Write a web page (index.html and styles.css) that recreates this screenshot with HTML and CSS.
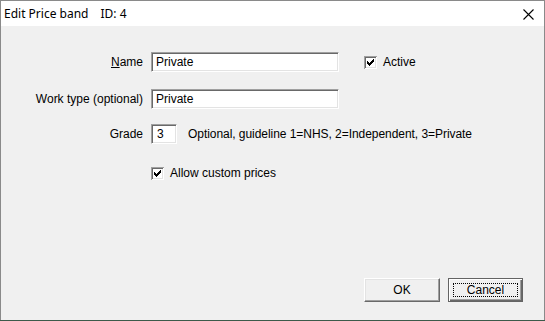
FILE: index.html
```html
<!DOCTYPE html>
<html>
<head>
<meta charset="utf-8">
<link rel="stylesheet" href="styles.css">
</head>
<body>
<div class="window">
  <div class="titlebar">
    <span class="title">Edit Price band</span>
    <span class="title-id">ID: 4</span>
    <span class="spacer"></span>
    <svg class="close" width="11" height="11" viewBox="0 0 11 11"><path d="M0.5 0.5 L10.5 10.5 M10.5 0.5 L0.5 10.5" stroke="#000" stroke-width="1.1" fill="none"/></svg>
  </div>
  <div class="content">
    <div class="row row-name">
      <label class="label"><u>N</u>ame</label>
      <div class="field field-wide">Private</div>
      <div class="check check-active">
        <svg class="cb" width="13" height="13" viewBox="0 0 13 13" shape-rendering="crispEdges"><rect x="0" y="0" width="13" height="13" fill="#a0a0a0"/><rect x="1" y="1" width="12" height="12" fill="#fff"/><rect x="1" y="1" width="11" height="11" fill="#696969"/><rect x="2" y="2" width="10" height="10" fill="#e3e3e3"/><rect x="2" y="2" width="9" height="9" fill="#fff"/><g fill="#000"><rect x="3" y="5" width="1" height="3"/><rect x="4" y="6" width="1" height="3"/><rect x="5" y="7" width="1" height="3"/><rect x="6" y="6" width="1" height="3"/><rect x="7" y="5" width="1" height="3"/><rect x="8" y="4" width="1" height="3"/><rect x="9" y="3" width="1" height="3"/></g></svg>
        <span>Active</span>
      </div>
    </div>
    <div class="row row-work">
      <label class="label">Work type (optional)</label>
      <div class="field field-wide">Private</div>
    </div>
    <div class="row row-grade">
      <label class="label">Grade</label>
      <div class="field field-small">3</div>
      <span class="hint">Optional, guideline 1=NHS, 2=Independent, 3=Private</span>
    </div>
    <div class="row row-custom">
      <div class="check check-custom">
        <svg class="cb" width="13" height="13" viewBox="0 0 13 13" shape-rendering="crispEdges"><rect x="0" y="0" width="13" height="13" fill="#a0a0a0"/><rect x="1" y="1" width="12" height="12" fill="#fff"/><rect x="1" y="1" width="11" height="11" fill="#696969"/><rect x="2" y="2" width="10" height="10" fill="#e3e3e3"/><rect x="2" y="2" width="9" height="9" fill="#fff"/><g fill="#000"><rect x="3" y="5" width="1" height="3"/><rect x="4" y="6" width="1" height="3"/><rect x="5" y="7" width="1" height="3"/><rect x="6" y="6" width="1" height="3"/><rect x="7" y="5" width="1" height="3"/><rect x="8" y="4" width="1" height="3"/><rect x="9" y="3" width="1" height="3"/></g></svg>
        <span>Allow custom prices</span>
      </div>
    </div>
    <div class="buttons">
      <button class="btn">OK</button>
      <button class="btn btn-focus"><span class="focus">Cancel</span></button>
    </div>
  </div>
</div>
</body>
</html>
```
FILE: styles.css
```css
html, body {
  margin: 0;
  padding: 0;
  background: #3c5a4a;
}
.window {
  width: 545px;
  height: 320px;
  box-sizing: border-box;
  border: 1px solid #8a8a8a;
  border-bottom: none;
  display: flex;
  flex-direction: column;
  background: #f0f0f0;
  font-family: "Liberation Sans", Arial, sans-serif;
  font-size: 12px;
  color: #000;
}
.titlebar {
  height: 25px;
  background: #fff;
  display: flex;
  align-items: center;
  padding-left: 3px;
  font-family: "Noto Sans", "Open Sans", sans-serif;
  font-size: 12px;
}
.title-id {
  margin-left: 12px;
}
.spacer { flex: 1; }
.close {
  margin-right: 10px;
  margin-top: 1px;
}
.content {
  flex: 1;
  display: flex;
  flex-direction: column;
  padding-top: 26px;
  padding-right: 21px;
  padding-bottom: 18px;
}
.row {
  display: flex;
  align-items: center;
  height: 20px;
}
.row-work { margin-top: 17px; }
.row-grade { margin-top: 15px; }
.row-custom { margin-top: 19px; padding-left: 150px; }
.label {
  width: 142px;
  box-sizing: border-box;
  text-align: right;
  padding-right: 0;
  margin-right: 8px;
}
.field {
  height: 20px;
  box-sizing: border-box;
  background: #fff;
  border-top: 1px solid #a0a0a0;
  border-left: 1px solid #a0a0a0;
  border-right: 1px solid #fff;
  border-bottom: 1px solid #fff;
  box-shadow: inset 1px 1px 0 #696969, inset -1px -1px 0 #e3e3e3;
  padding: 2px 0 0 4px;
  line-height: 15px;
}
.field-wide { width: 188px; }
.field-small { width: 26px; padding-left: 5px; }
.hint { margin-left: 11px; letter-spacing: -0.05px; }
.check {
  display: flex;
  align-items: center;
}
.check .cb { margin-right: 6px; flex: none; }
.check-active { margin-left: 25px; }
.buttons {
  margin-top: auto;
  display: flex;
  justify-content: flex-end;
  gap: 8px;
}
.btn {
  width: 76px;
  height: 24px;
  box-sizing: border-box;
  background: #f0f0f0;
  font-family: "Liberation Sans", Arial, sans-serif;
  font-size: 12px;
  color: #000;
  border-top: 1px solid #fff;
  border-left: 1px solid #fff;
  border-right: 1px solid #696969;
  border-bottom: 1px solid #696969;
  box-shadow: inset -1px -1px 0 #a0a0a0, inset 1px 1px 0 #e3e3e3;
  padding: 0;
  display: flex;
  align-items: center;
  justify-content: center;
}
.btn-focus {
  width: 75px;
  border: 1px solid #646464;
  box-shadow: inset 1px 1px 0 #fff, inset -1px -1px 0 #696969, inset -2px -2px 0 #a0a0a0;
  padding: 3px;
}
.focus {
  flex: 1;
  align-self: stretch;
  display: flex;
  align-items: center;
  justify-content: center;
  border: 1px dotted #000;
  margin: 1px;
}
```
